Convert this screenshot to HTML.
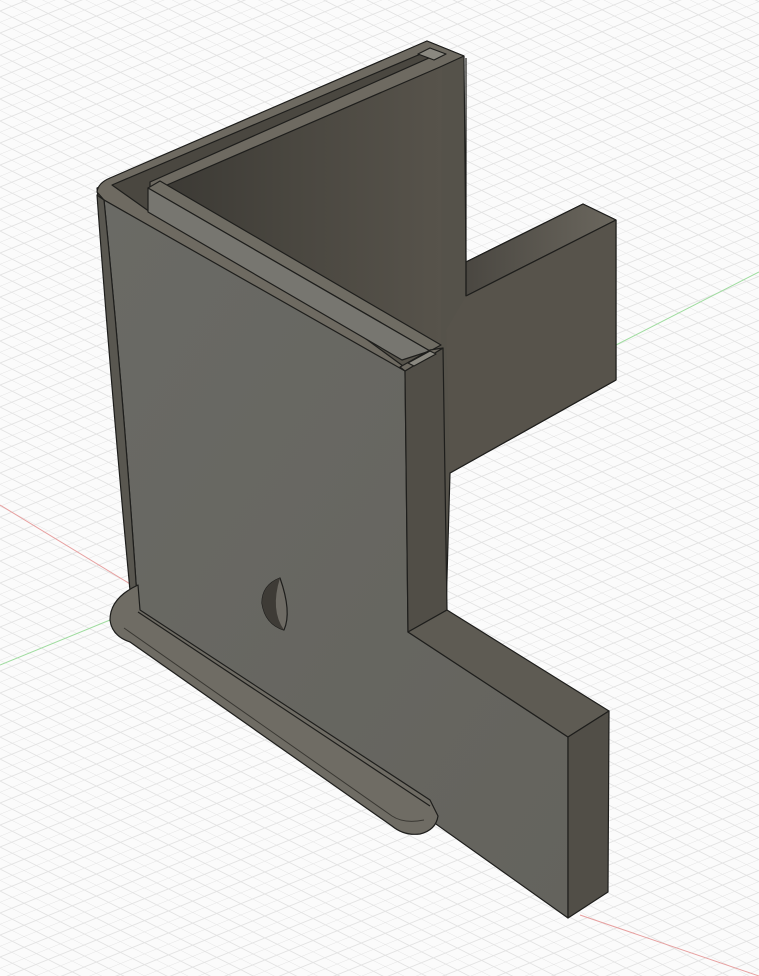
<!DOCTYPE html>
<html><head><meta charset="utf-8"><style>
html,body{margin:0;padding:0;background:#fff;}
svg{display:block}
</style></head><body>
<svg width="759" height="976" viewBox="0 0 759 976" xmlns="http://www.w3.org/2000/svg">
<defs>
<pattern id="g1" width="22" height="22" patternUnits="userSpaceOnUse" patternTransform="skewY(27)">
<rect width="22" height="22" fill="#fbfbfb"/>
<path d="M0 0H22 M0 11H22" stroke="#e3e3e3" stroke-width="1"/>
</pattern>
<pattern id="g2" width="22" height="22" patternUnits="userSpaceOnUse" patternTransform="skewY(-22)">
<path d="M0 0H22 M0 11H22" stroke="#e3e3e3" stroke-width="1"/>
</pattern>
<linearGradient id="inner" x1="0" y1="0" x2="1" y2="0">
<stop offset="0" stop-color="#3a3833"/><stop offset="0.5" stop-color="#4a4740"/><stop offset="1" stop-color="#57534b"/>
</linearGradient>
<linearGradient id="front" x1="0" y1="0" x2="1" y2="1">
<stop offset="0" stop-color="#6a6a65"/><stop offset="1" stop-color="#64635d"/>
</linearGradient>
<linearGradient id="tabtop" x1="0" y1="0" x2="1" y2="0">
<stop offset="0" stop-color="#4a4741"/><stop offset="1" stop-color="#6b675e"/>
</linearGradient>
</defs>
<rect width="759" height="976" fill="url(#g1)"/>
<rect width="759" height="976" fill="url(#g2)"/>
<line x1="0" y1="505" x2="140" y2="590" stroke="#e7a0a0" stroke-width="1"/>
<line x1="580" y1="915" x2="759" y2="976" stroke="#e7a0a0" stroke-width="1"/>
<line x1="616" y1="345" x2="759" y2="272" stroke="#9fdc9f" stroke-width="1"/>
<line x1="0" y1="665" x2="110" y2="620" stroke="#9fdc9f" stroke-width="1"/>

<g stroke="#1e1e1c" stroke-width="1.2" stroke-linejoin="round">
<polygon points="97,188 427,41 464,56 466,262 583,204 616,220 616,380 450,473 446,612 140,612" fill="#55524a"/>
<polygon points="150,188 430,53 442,60 441,345 160,190" fill="url(#inner)" stroke="none"/>
<polygon points="466,262 583,204 616,220 466,296" fill="url(#tabtop)"/>
<polygon points="466,296 616,220 616,380 450,473 446,330" fill="#57534b" stroke="none"/>
<line x1="466" y1="296" x2="616" y2="220"/>
<line x1="616" y1="220" x2="616" y2="380"/>
<line x1="616" y1="380" x2="450" y2="473"/>
<line x1="466" y1="58" x2="466" y2="296"/>
<path d="M97,192 Q98,183 110,178 L427,41 L464,56 L440,67 L160,188 L403,366 L405,372 L104,200 Z" fill="#6e6a61"/>
<path d="M112,185 L430,50 L438,54 L150,182 L150,212 Z" fill="#4a4740"/>
<polygon points="430,48 446,54 434,60 418,54" fill="#8a8880"/>
<polygon points="148,188 160,181 441,345 430,351" fill="#6f6c63"/>
<polygon points="148,188 148,212 402,360 430,351" fill="#777670"/>
<path d="M104,200 L405,371 L408,632 L568,737 L568,918 L138,612 Q124,400 104,200 Z" fill="url(#front)"/>
<path d="M97,195 L104,200 Q124,400 138,612 L132,612 Q112,400 97,195 Z" fill="#595750"/>
<polygon points="405,371 443,348 447,610 408,632" fill="#514e47"/>
<polygon points="400,367 430,350 443,348 405,371" fill="#6e6a61"/>
<polygon points="408,363 430,351 436,354 414,366" fill="#8a8880"/>
<polygon points="408,632 447,610 609,711 568,737" fill="#5e5b53"/>
<polygon points="568,737 609,711 608,892 568,918" fill="#514e47"/>
<path d="M138,585 Q110,598 110,620 Q112,636 130,642 L392,826 Q404,836 420,834 Q436,830 438,816 L430,800 L140,610 Z" fill="#6f6c64"/>
<path d="M124,628 L392,816 Q404,824 424,820" fill="none" stroke="#3a3833" stroke-width="1"/>
<path d="M138,612 L430,806" fill="none" stroke="#1e1e1c"/>
<path d="M280,578 Q262,585 262,603 Q265,624 284,630 Q292,612 280,578 Z" fill="#6e6b64"/>
<path d="M280,578 Q262,585 262,603 Q265,624 284,630 Q270,610 280,578 Z" fill="#3e3b36" stroke="none"/>
</g>
</svg>
</body></html>
